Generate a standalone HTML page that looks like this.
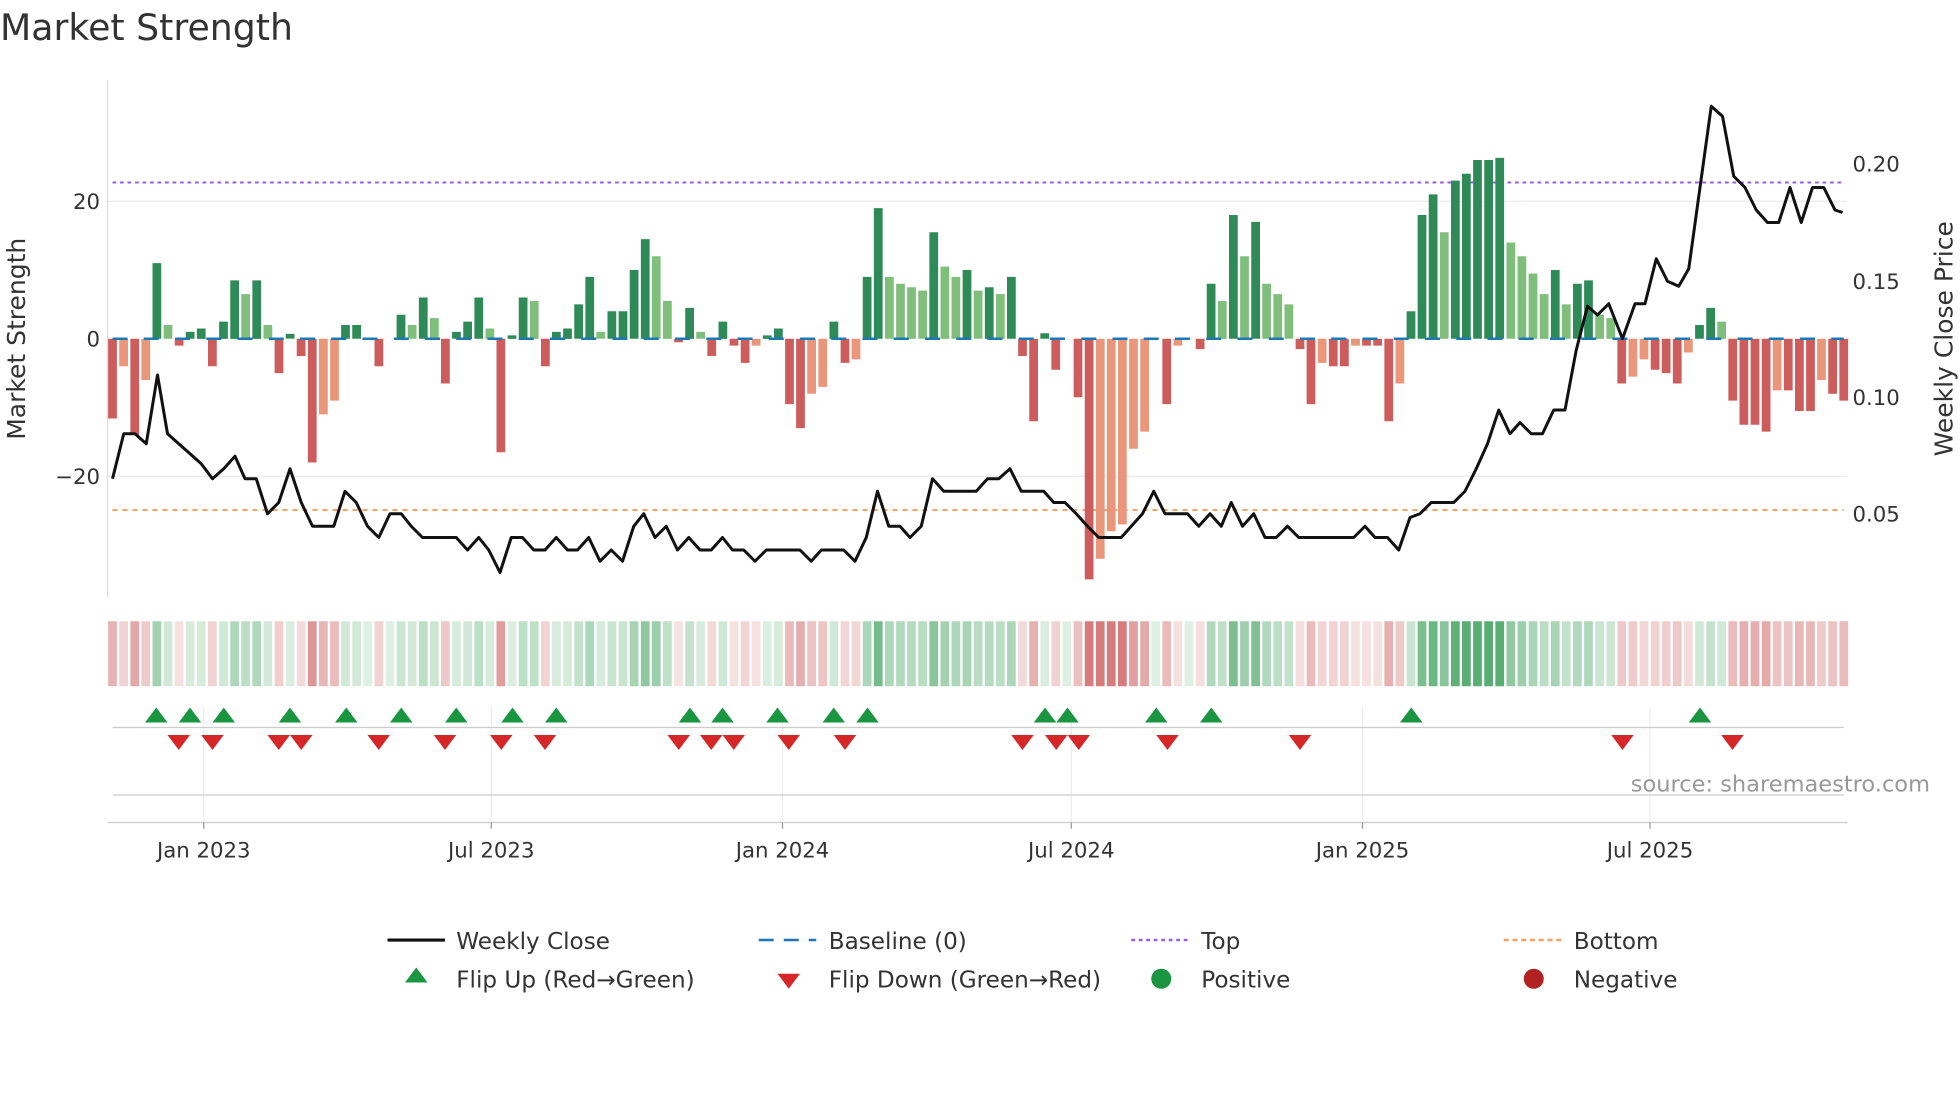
<!DOCTYPE html>
<html><head><meta charset="utf-8"><style>
html,body{margin:0;padding:0;background:#fff}
svg{display:block;font-family:"DejaVu Sans","Liberation Sans",sans-serif}
</style></head><body>
<svg id="s" width="1960" height="1102" viewBox="0 0 1568 881.6" xmlns="http://www.w3.org/2000/svg">
<rect width="1568" height="881.6" fill="#fff"/>
<text x="0" y="32" font-size="29" fill="#333">Market Strength</text>
<g id="g"></g>
<text transform="translate(20,271) rotate(-90)" text-anchor="middle" font-size="20" fill="#333">Market Strength</text>
<text transform="translate(1562,271) rotate(-90)" text-anchor="middle" font-size="20" fill="#333">Weekly Close Price</text>
<g font-size="17" fill="#333">
<text x="80" y="167" text-anchor="end">20</text>
<text x="80" y="277" text-anchor="end">0</text>
<text x="80" y="387" text-anchor="end">−20</text>
<text x="1482" y="137">0.20</text>
<text x="1482" y="231">0.15</text>
<text x="1482" y="324">0.10</text>
<text x="1482" y="417">0.05</text>
<text x="163" y="686" text-anchor="middle">Jan 2023</text>
<text x="393" y="686" text-anchor="middle">Jul 2023</text>
<text x="626" y="686" text-anchor="middle">Jan 2024</text>
<text x="857" y="686" text-anchor="middle">Jul 2024</text>
<text x="1090" y="686" text-anchor="middle">Jan 2025</text>
<text x="1320" y="686" text-anchor="middle">Jul 2025</text>
</g>
<text x="1544" y="633" text-anchor="end" font-size="18" fill="#999">source: sharemaestro.com</text>
<g font-size="18.5" fill="#333">
<line x1="310" y1="752" x2="356" y2="752" stroke="#111" stroke-width="2.5"/>
<text x="365" y="759">Weekly Close</text>
<line x1="607" y1="752" x2="653" y2="752" stroke="#1f77b4" stroke-width="2" stroke-dasharray="12,8"/>
<text x="663" y="759">Baseline (0)</text>
<line x1="905" y1="752" x2="951" y2="752" stroke="#9b5de5" stroke-width="2" stroke-dasharray="3,3"/>
<text x="961" y="759">Top</text>
<line x1="1203" y1="752" x2="1249" y2="752" stroke="#f4a261" stroke-width="2" stroke-dasharray="4,3"/>
<text x="1259" y="759">Bottom</text>
<polygon points="333,774 342,786 324,786" fill="#1a9641"/>
<text x="365" y="790">Flip Up (Red→Green)</text>
<polygon points="622,779 640,779 631,791" fill="#d62728"/>
<text x="663" y="790">Flip Down (Green→Red)</text>
<circle cx="929" cy="783" r="8" fill="#1a9641"/>
<text x="961" y="790">Positive</text>
<circle cx="1227" cy="783" r="8" fill="#b22222"/>
<text x="1259" y="790">Negative</text>
</g>
</svg>
<script>
var v=[-11.6,-4,-14,-6,11,2,-1,1,1.5,-4,2.5,8.5,6.5,8.5,2,-5,0.7,-2.5,-18,-11,-9,2,2,0,-4,0,3.5,2,6,3,-6.5,1,2.5,6,1.5,-16.5,0.5,6,5.5,-4,1,1.5,5,9,1,4,4,10,14.5,12,5.5,-0.5,4.5,1,-2.5,2.5,-1,-3.5,-1,0.5,1.5,-9.5,-13,-8,-7,2.5,-3.5,-3,9,19,9,8,7.5,7,15.5,10.5,9,10,7,7.5,6.5,9,-2.5,-12,0.8,-4.5,0,-8.5,-35,-32,-28,-27,-16,-13.5,0,-9.5,-1,0,-1.5,8,5.5,18,12,17,8,6.5,5,-1.5,-9.5,-3.5,-4,-4,-1,-1,-1,-12,-6.5,4,18,21,15.5,23,24,26,26,26.3,14,12,9.5,6.5,10,5,8,8.5,3.5,3,-6.5,-5.5,-3,-4.5,-5,-6.5,-2,2,4.5,2.5,-9,-12.5,-12.5,-13.5,-7.5,-7.5,-10.5,-10.5,-6,-8,-9];
var step=(1475-90)/(v.length-1),h='';
[161,381].forEach(function(y){h+='<line x1="86" y1="'+y+'" x2="1478" y2="'+y+'" stroke="#ececec"/>';});
[163,393,626,857,1090,1320].forEach(function(x){h+='<line x1="'+x+'" y1="565" x2="'+x+'" y2="658" stroke="#ececec"/>';});
h+='<line x1="86" y1="64" x2="86" y2="478" stroke="#ddd"/>';
h+='<line x1="86" y1="658" x2="1478" y2="658" stroke="#ccc"/>';
h+='<line x1="90" y1="582" x2="1475" y2="582" stroke="#ccc"/>';
h+='<line x1="90" y1="636" x2="1475" y2="636" stroke="#ccc"/>';
[163,393,626,857,1090,1320].forEach(function(x){h+='<line x1="'+x+'" y1="658" x2="'+x+'" y2="663" stroke="#999"/>';});
h+='<line x1="90" y1="146" x2="1475" y2="146" stroke="#9b5de5" stroke-width="1.6" stroke-dasharray="3,3"/>';
h+='<line x1="90" y1="408" x2="1475" y2="408" stroke="#f4a261" stroke-width="1.6" stroke-dasharray="4,4"/>';
for(var i=0;i<v.length;i++){
 var x=90+i*step-3.5,val=v[i],p=i?v[i-1]:0,c;
 if(val>=0)c=(val>=p)?'#2e8b57':'#7fbf7b';else c=(val<=p)?'#cd5c5c':'#e9967a';
 var y=val>=0?271-val*5.5:271,hh=Math.abs(val)*5.5;
 h+='<rect x="'+x.toFixed(1)+'" y="'+y.toFixed(1)+'" width="7" height="'+hh.toFixed(1)+'" fill="'+c+'"/>';
 var a=Math.min(1,0.2+Math.abs(val)/30);
 var hc=val>=0?'rgba(60,160,90,'+(a*0.85).toFixed(2)+')':'rgba(200,80,80,'+(a*0.75).toFixed(2)+')';
 h+='<rect x="'+x.toFixed(1)+'" y="497" width="7" height="52" fill="'+hc+'"/>';
}
h+='<line x1="90" y1="271" x2="1475" y2="271" stroke="#1f77b4" stroke-width="2" stroke-dasharray="12,13"/>';
var pts=[[90,383],[99,347],[108,347],[117,355],[126,300],[134,347],[143,355],[152,363],[161,371],[170,383],[179,375],[188,365],[196,383],[205,383],[214,411],[223,402],[232,375],[241,402],[250,421],[258,421],[267,421],[276,393],[285,402],[294,421],[303,430],[312,411],[321,411],[329,421],[338,430],[347,430],[356,430],[365,430],[374,440],[383,430],[391,440],[400,458],[409,430],[418,430],[427,440],[436,440],[445,430],[454,440],[462,440],[471,430],[480,449],[489,440],[498,449],[507,421],[515,411],[524,430],[533,421],[542,440],[551,430],[560,440],[569,440],[578,430],[586,440],[595,440],[604,449],[613,440],[622,440],[631,440],[640,440],[649,449],[657,440],[666,440],[675,440],[684,449],[693,430],[702,393],[711,421],[720,421],[728,430],[737,421],[746,383],[755,393],[764,393],[773,393],[781,393],[790,383],[799,383],[808,375],[817,393],[826,393],[835,393],[843,402],[852,402],[861,411],[870,421],[879,430],[888,430],[897,430],[905,421],[914,411],[923,393],[932,411],[941,411],[950,411],[959,421],[968,411],[977,421],[985,402],[994,421],[1003,411],[1012,430],[1021,430],[1030,421],[1039,430],[1048,430],[1083,430],[1092,421],[1100,430],[1110,430],[1119,440],[1128,414],[1136,411],[1145,402],[1163,402],[1172,393],[1181,375],[1190,355],[1199,328],[1208,347],[1216,338],[1225,347],[1234,347],[1243,328],[1252,328],[1261,280],[1270,245],[1278,252],[1287,243],[1298,271],[1308,243],[1316,243],[1325,207],[1334,225],[1343,229],[1351,215],[1360,150],[1369,85],[1378,93],[1387,141],[1396,150],[1405,168],[1414,178],[1423,178],[1432,150],[1441,178],[1450,150],[1459,150],[1468,168],[1474,170]];
h+='<polyline fill="none" stroke="#111" stroke-width="2.4" stroke-linejoin="round" points="'+pts.map(function(p){return p.join(',')}).join(' ')+'"/>';
[125,152,179,232,277,321,365,410,445,552,578,622,667,694,836,854,925,969,1129,1360].forEach(function(x){h+='<polygon points="'+x+',566 '+(x+9)+',578 '+(x-9)+',578" fill="#1a9641"/>';});
[143,170,223,241,303,356,401,436,543,569,587,631,676,818,845,863,934,1040,1298,1386].forEach(function(x){h+='<polygon points="'+(x-9)+',588 '+(x+9)+',588 '+x+',600" fill="#d62728"/>';});
document.getElementById('g').innerHTML=h;
</script>
</body></html>
